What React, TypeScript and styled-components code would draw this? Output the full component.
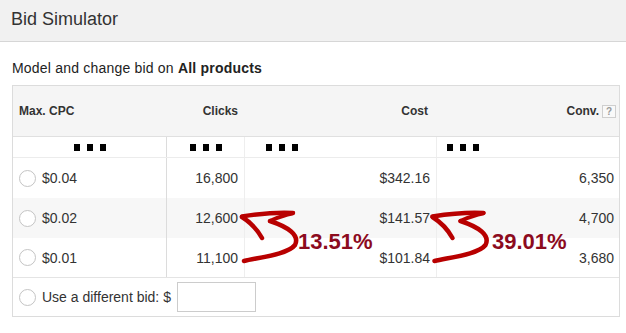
import React from "react";
import styled, { createGlobalStyle } from "styled-components";

const Global = createGlobalStyle`
  html, body { margin: 0; padding: 0; background: #fff; }
  body { font-family: "Liberation Sans", Arial, sans-serif; color: #333; }
`;

const Page = styled.div`
  position: relative;
  width: 626px;
  height: 333px;
  overflow: hidden;
`;

const TitleBar = styled.div`
  height: 39px;
  padding: 0 0 2px 11px;
  background: #f1f1f1;
  border-bottom: 1px solid #d6d6d6;
  font-size: 18px;
  line-height: 39px;
  color: #333;
`;

const Intro = styled.div`
  margin: 18px 0 9px 12px;
  font-size: 14px;
  line-height: 16px;
  letter-spacing: 0.2px;
  color: #222;
  b { font-weight: bold; }
`;

const Table = styled.div`
  margin-left: 12px;
  width: 608px;
  box-sizing: border-box;
  border: 1px solid #dcdcdc;
`;

const Row = styled.div<{ $height: number; $bg?: string; $line?: string }>`
  display: grid;
  grid-template-columns: 153px 78px 192px 1fr;
  height: ${(p) => p.$height}px;
  background: ${(p) => p.$bg || "#fff"};
  border-bottom: ${(p) => (p.$line ? `1px solid ${p.$line}` : "none")};
`;

const Cell = styled.div<{ $align?: "left" | "right"; $pr?: number; $divider?: string }>`
  display: flex;
  align-items: center;
  justify-content: ${(p) => (p.$align === "right" ? "flex-end" : "flex-start")};
  padding: 0 ${(p) => p.$pr ?? 0}px 0 ${(p) => (p.$align === "right" ? 0 : 6)}px;
  border-left: ${(p) => (p.$divider ? `1px solid ${p.$divider}` : "none")};
  font-size: 14px;
  color: #333;
  min-width: 0;
`;

const HeadCell = styled(Cell)`
  font-size: 12px;
  font-weight: bold;
  color: #333;
`;

const FullCell = styled.div`
  grid-column: 1 / -1;
  display: flex;
  align-items: center;
  padding-left: 6px;
  font-size: 14px;
  color: #333;
`;

const Help = styled.span`
  display: inline-flex;
  align-items: center;
  justify-content: center;
  width: 12px;
  height: 11px;
  margin-left: 3px;
  border: 1px solid #cfcfcf;
  background: #f9f9f9;
  color: #999;
  font-size: 10px;
  font-weight: bold;
`;

const DotCell = styled.div<{ $pl: number; $divider?: string }>`
  display: flex;
  align-items: center;
  gap: 7px;
  padding-left: ${(p) => p.$pl}px;
  border-left: ${(p) => (p.$divider ? `1px solid ${p.$divider}` : "none")};
`;

const Dot = styled.span`
  width: 6px;
  height: 7px;
  background: #000;
`;

const Radio = styled.span`
  width: 15px;
  height: 15px;
  border-radius: 50%;
  border: 1px solid #c4c4c4;
  background: #fff;
  margin-right: 6px;
  flex: none;
`;

const BidInput = styled.input`
  width: 79px;
  height: 30px;
  box-sizing: border-box;
  margin-left: 6px;
  border: 1px solid #cccccc;
  padding: 0 4px;
  font: inherit;
`;

const Overlay = styled.svg`
  position: absolute;
  left: 0;
  top: 0;
  pointer-events: none;
`;

const Percent = styled.span<{ $x: number; $y: number }>`
  position: absolute;
  left: ${(p) => p.$x}px;
  top: ${(p) => p.$y}px;
  font-size: 22px;
  line-height: 22px;
  font-weight: bold;
  color: #8c0b1e;
`;

const Dots = () => (
  <>
    <Dot />
    <Dot />
    <Dot />
  </>
);

const rows = [
  { bid: "$0.04", clicks: "16,800", cost: "$342.16", conv: "6,350", bg: "#fff", h: 40 },
  { bid: "$0.02", clicks: "12,600", cost: "$141.57", conv: "4,700", bg: "#f7f7f7", h: 40 },
  { bid: "$0.01", clicks: "11,100", cost: "$101.84", conv: "3,680", bg: "#fff", h: 39 },
];

const Arrow = ({ dx }: { dx: number }) => (
  <g transform={`translate(${dx} 0)`} fill="none" stroke="#b80000" strokeLinecap="round" strokeLinejoin="round">
    <path d="M244,261 C 262,257 288,254 295,245 C 300,235 288,227 270,221" strokeWidth="4.5" />
    <path d="M270,221 C 278,217 287,215 293,213" strokeWidth="4" />
    <path d="M293,213 C 275,212 258,214 242,216.5" strokeWidth="4.5" />
    <path d="M242,217 C 250,222 257,229 262,238" strokeWidth="4.5" />
  </g>
);

export default function App() {
  return (
    <Page>
      <Global />
      <TitleBar>Bid Simulator</TitleBar>
      <Intro>
        Model and change bid on <b>All products</b>
      </Intro>
      <Table>
        <Row $height={50} $bg="#f5f5f5" $line="#e0e0e0">
          <HeadCell>Max. CPC</HeadCell>
          <HeadCell $align="right" $pr={6}>Clicks</HeadCell>
          <HeadCell $align="right" $pr={8}>Cost</HeadCell>
          <HeadCell $align="right" $pr={3}>
            Conv.<Help>?</Help>
          </HeadCell>
        </Row>
        <Row $height={20} $line="#ececec">
          <DotCell $pl={61}>
            <Dots />
          </DotCell>
          <DotCell $pl={23} $divider="#dcdcdc">
            <Dots />
          </DotCell>
          <DotCell $pl={21} $divider="#eeeeee">
            <Dots />
          </DotCell>
          <DotCell $pl={10} $divider="#eeeeee">
            <Dots />
          </DotCell>
        </Row>
        {rows.map((r, i) => (
          <Row key={r.bid} $height={r.h} $bg={r.bg} $line={i === rows.length - 1 ? "#e4e4e4" : undefined}>
            <Cell>
              <Radio />
              {r.bid}
            </Cell>
            <Cell $align="right" $pr={6} $divider="#dcdcdc">{r.clicks}</Cell>
            <Cell $align="right" $pr={6} $divider="#eeeeee">{r.cost}</Cell>
            <Cell $align="right" $pr={5} $divider="#eeeeee">{r.conv}</Cell>
          </Row>
        ))}
        <Row $height={38}>
          <FullCell>
            <Radio />
            Use a different bid: $
            <BidInput />
          </FullCell>
        </Row>
      </Table>
      <Overlay width="626" height="333" viewBox="0 0 626 333">
        <Arrow dx={0} />
        <Arrow dx={190.5} />
      </Overlay>
      <Percent $x={298} $y={231}>13.51%</Percent>
      <Percent $x={492} $y={231}>39.01%</Percent>
    </Page>
  );
}
